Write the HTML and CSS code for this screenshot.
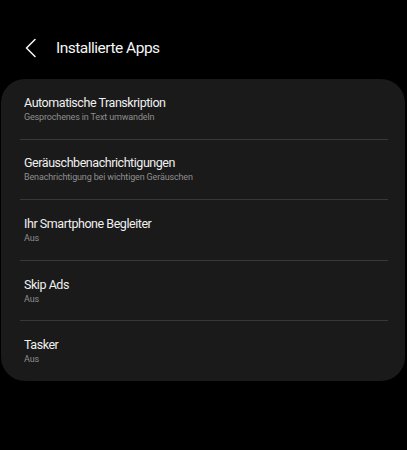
FILE: index.html
```html
<!DOCTYPE html>
<html lang="de">
<head>
<meta charset="utf-8">
<title>Installierte Apps</title>
<link rel="stylesheet" href="styles.css">
</head>
<body>
<div class="screen">
  <header class="topbar">
    <svg class="back" width="12" height="20" viewBox="0 0 12 20" aria-hidden="true">
      <path d="M10 1.5 L1.5 10 L10 18.5" fill="none" stroke="#f2f2f2" stroke-width="1.6" stroke-linecap="round" stroke-linejoin="round"/>
    </svg>
    <h1 class="title">Installierte Apps</h1>
  </header>
  <section class="card">
    <div class="row">
      <div class="row-title">Automatische Transkription</div>
      <div class="row-sub">Gesprochenes in Text umwandeln</div>
    </div>
    <div class="divider"></div>
    <div class="row">
      <div class="row-title">Geräuschbenachrichtigungen</div>
      <div class="row-sub">Benachrichtigung bei wichtigen Geräuschen</div>
    </div>
    <div class="divider"></div>
    <div class="row">
      <div class="row-title">Ihr Smartphone Begleiter</div>
      <div class="row-sub">Aus</div>
    </div>
    <div class="divider"></div>
    <div class="row">
      <div class="row-title">Skip Ads</div>
      <div class="row-sub">Aus</div>
    </div>
    <div class="divider"></div>
    <div class="row">
      <div class="row-title">Tasker</div>
      <div class="row-sub">Aus</div>
    </div>
  </section>
</div>
</body>
</html>
```

FILE: styles.css
```css
html, body {
  margin: 0;
  padding: 0;
  background: #000;
}
body {
  width: 407px;
  height: 450px;
  overflow: hidden;
  font-family: Roboto, "Noto Sans", "Liberation Sans", sans-serif;
  color: #f2f2f2;
}
.screen {
  display: flex;
  flex-direction: column;
  padding: 0 2px 0 1px;
}
.topbar {
  display: flex;
  align-items: center;
  height: 79px;
  padding-left: 24px;
  padding-top: 17px;
  box-sizing: border-box;
}
.back {
  display: block;
  margin-right: 19px;
}
.title {
  margin: 0;
  font-size: 15.5px;
  letter-spacing: -0.5px;
  font-weight: 400;
  color: #f5f5f5;
}
.card {
  background: #1a1a1a;
  border-radius: 24px;
  display: flex;
  flex-direction: column;
}
.row {
  height: 59.6px;
  display: flex;
  flex-direction: column;
  justify-content: center;
  padding-left: 23px;
  box-sizing: border-box;
}
.row-title {
  font-size: 12.5px;
  letter-spacing: -0.45px;
  line-height: 16px;
  color: #f0f0f0;
}
.row-sub {
  font-size: 9px;
  letter-spacing: -0.15px;
  line-height: 12px;
  color: #8e8e8e;
}
.divider {
  height: 1px;
  background: #383838;
  margin: 0 17px 0 19px;
}
```
